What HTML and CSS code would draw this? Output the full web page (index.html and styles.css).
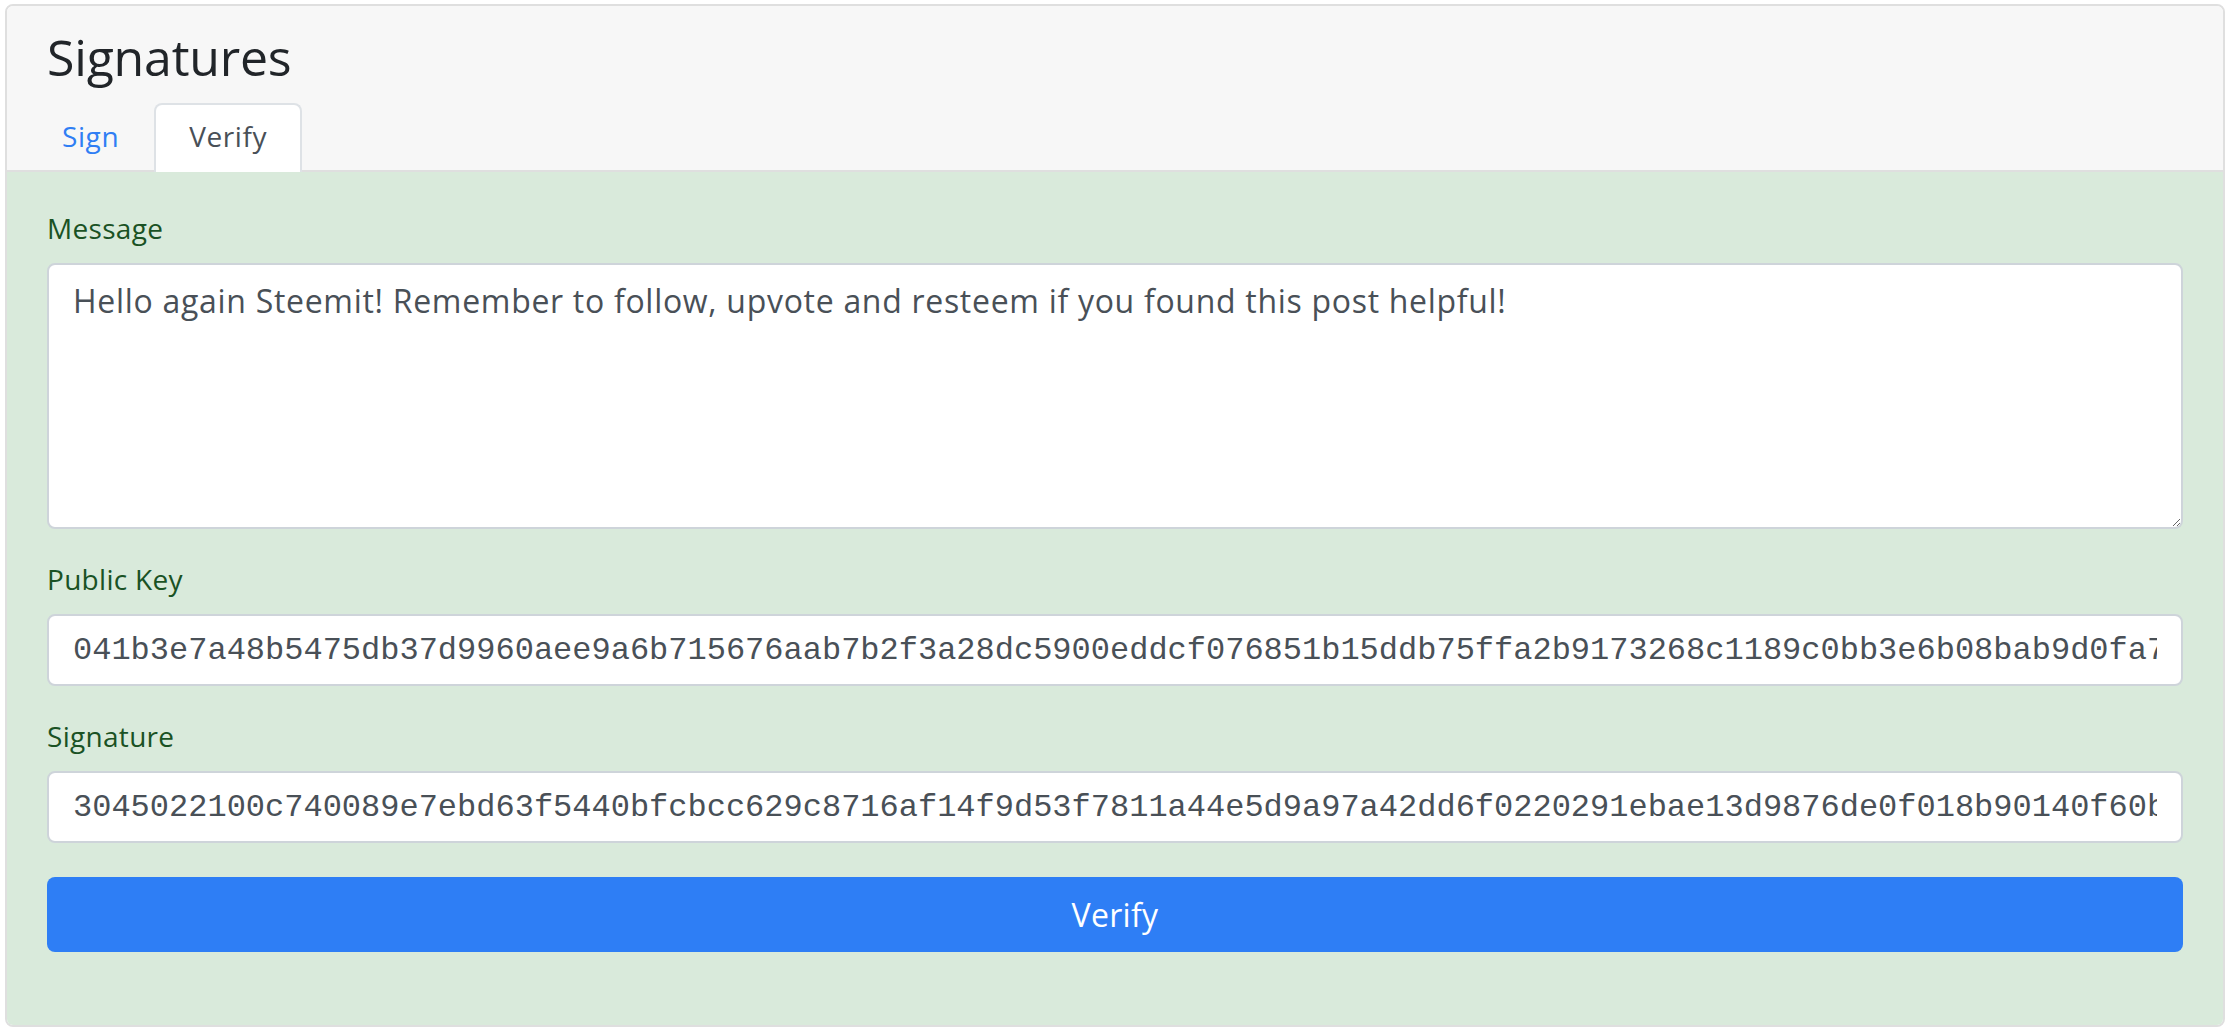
FILE: index.html
```html
<!DOCTYPE html>
<html>
<head>
<meta charset="utf-8">
<title>Signatures</title>
<link rel="stylesheet" href="styles.css">
</head>
<body>
<div class="page">
  <div class="card">
    <div class="card-header">
      <h3 class="title">Signatures</h3>
      <ul class="tabs">
        <li class="tab"><a class="tab-link">Sign</a></li>
        <li class="tab"><a class="tab-link active">Verify</a></li>
      </ul>
    </div>
    <div class="card-body">
      <form class="form">
        <div class="group">
          <label class="label">Message</label>
          <textarea class="control textarea">Hello again Steemit! Remember to follow, upvote and resteem if you found this post helpful!</textarea>
        </div>
        <div class="group">
          <label class="label">Public Key</label>
          <input class="control mono" type="text" value="041b3e7a48b5475db37d9960aee9a6b715676aab7b2f3a28dc5900eddcf076851b15ddb75ffa2b9173268c1189c0bb3e6b08bab9d0fa7e2c4b1d98a3f">
        </div>
        <div class="group">
          <label class="label">Signature</label>
          <input class="control mono" type="text" value="3045022100c740089e7ebd63f5440bfcbcc629c8716af14f9d53f7811a44e5d9a97a42dd6f0220291ebae13d9876de0f018b90140f60b5a2c7e9d3">
        </div>
        <button class="btn" type="button">Verify</button>
      </form>
    </div>
  </div>
</div>
</body>
</html>
```

FILE: styles.css
```css
html, body {
  margin: 0;
  padding: 0;
  background: #ffffff;
}

body {
  font-family: "Open Sans", "Noto Sans", sans-serif;
  color: #212529;
}

.page {
  padding: 4px 9px 7px 5px;
}

.card {
  border: 2px solid #dfdfdf;
  border-radius: 8px;
  overflow: hidden;
  background: #ffffff;
}

.card-header {
  background: #f7f7f7;
  padding: 24px 40px 0 40px;
  border-bottom: 2px solid #dfdfdf;
}

.title {
  margin: 0 0 19px 0;
  font-size: 50px;
  line-height: 54px;
  font-weight: 400;
  color: #212529;
  letter-spacing: -0.2px;
}

.tabs {
  list-style: none;
  margin: 0 0 -2px -20px;
  padding: 0;
  display: flex;
}

.tab {
  display: block;
}

.tab-link {
  display: block;
  padding: 11px 33px 16px 33px;
  font-size: 28px;
  line-height: 40px;
  letter-spacing: 0.6px;
  color: #2f7ef4;
  border: 2px solid transparent;
  border-bottom: 0;
  border-radius: 8px 8px 0 0;
  cursor: pointer;
}

.tab-link.active {
  color: #495057;
  background: #ffffff;
  border-color: #dee2e6;
}

.card-body {
  background: #d9eadb;
  padding: 38px 40px 40px 40px;
}

.form {
  display: flex;
  flex-direction: column;
  padding-bottom: 33px;
}

.group {
  display: flex;
  flex-direction: column;
  margin-bottom: 32px;
}

.label {
  display: block;
  font-size: 28px;
  line-height: 36px;
  letter-spacing: 0.3px;
  margin-bottom: 17px;
  color: #1a5224;
}

.control {
  display: block;
  box-sizing: border-box;
  width: 100%;
  margin: 0;
  border: 2px solid #ced4da;
  border-radius: 8px;
  background: #ffffff;
  color: #495057;
  outline: none;
}

.textarea {
  height: 266px;
  padding: 12px 24px;
  font-family: "Open Sans", "Noto Sans", sans-serif;
  font-size: 32px;
  line-height: 48px;
  letter-spacing: 0.7px;
  resize: vertical;
}

.mono {
  height: 72px;
  padding: 0 24px;
  font-family: "Liberation Mono", "Courier New", monospace;
  font-size: 32px;
}

.btn {
  display: block;
  width: 100%;
  height: 75px;
  margin-top: 2px;
  border: 0;
  border-radius: 8px;
  background: #2e7ef5;
  color: #ffffff;
  font-family: "Open Sans", "Noto Sans", sans-serif;
  font-size: 32px;
  letter-spacing: 0.3px;
  cursor: pointer;
}
```
